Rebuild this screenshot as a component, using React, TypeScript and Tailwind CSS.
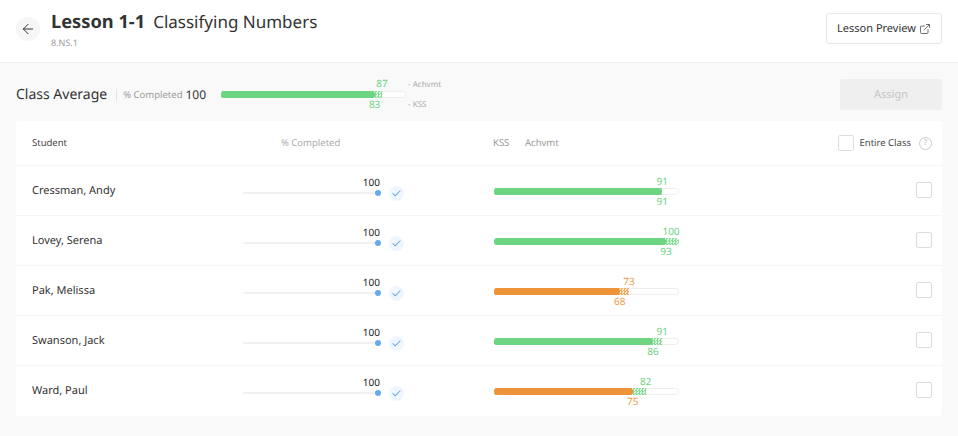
import React from "react";
import { ArrowLeft, ExternalLink, Check } from "lucide-react";

type S = { name: string; kss: number; ach: number };
const students: S[] = [
  { name: "Cressman, Andy", kss: 91, ach: 91 },
  { name: "Lovey, Serena", kss: 93, ach: 100 },
  { name: "Pak, Melissa", kss: 68, ach: 73 },
  { name: "Swanson, Jack", kss: 86, ach: 91 },
  { name: "Ward, Paul", kss: 75, ach: 82 },
];

const colorText = (v: number) => (v >= 80 ? "text-[#6dd482]" : "text-[#f09a45]");
const colorBg = (v: number) => (v >= 80 ? "bg-[#6dd482]" : "bg-[#ee9337]");
const hatch = (v: number) =>
  v >= 80
    ? "bg-[repeating-conic-gradient(#86dc98_0_25%,#dff6e4_0_50%)] bg-[length:3px_3px]"
    : "bg-[repeating-conic-gradient(#f2a860_0_25%,#fce8d4_0_50%)] bg-[length:3px_3px]";

function ScoreBar({ kss, ach, top, bottom }: { kss: number; ach: number; top: string; bottom: string }) {
  const width = 185;
  const pos = (v: number) => (v / 100) * width - 1;
  const labelPos = (v: number) => Math.min(pos(v), width - 9);
  return (
    <div className="relative h-[7px] rounded-full border border-[#eeeeee] bg-white" style={{ width }}>
      <div className={`absolute left-[-1px] top-[-1px] h-[7px] ${hatch(ach)}`} style={{ width: (ach / 100) * width, borderRadius: ach === 100 ? 9999 : 0 }} />
      <div className={`absolute left-[-1px] top-[-1px] h-[7px] rounded-full ${colorBg(kss)}`} style={{ width: (kss / 100) * width }} />
      <span className={`absolute ${top} -translate-x-1/2 text-[10px] leading-[14px] ${colorText(ach)}`} style={{ left: labelPos(ach) }}>{ach}</span>
      <span className={`absolute ${bottom} -translate-x-1/2 text-[10px] leading-[14px] ${colorText(kss)}`} style={{ left: labelPos(kss) }}>{kss}</span>
    </div>
  );
}

function Box({ className }: { className: string }) {
  return <div className={`rounded-[2px] border border-[#dddddd] bg-white ${className}`} />;
}

function Row({ s }: { s: S }) {
  return (
    <div className="flex h-[50px] items-center border-t border-[#f5f5f5] pl-4 pr-[10px]">
      <div className="w-[211px] pt-px text-[11px] text-[#333333]">{s.name}</div>
      <div className="relative mt-[4px] h-[2px] w-[135px] rounded-full bg-[#f0f0f0]">
        <span className="absolute right-[-2px] top-[-17px] text-[10px] leading-[14px] text-[#222222]">100</span>
        <span className="absolute right-[-3px] top-[-2px] h-[6px] w-[6px] rounded-full bg-[#65a9ee]" />
      </div>
      <div className="ml-[11px] mt-[5px] flex h-[15px] w-[15px] items-center justify-center rounded-full bg-[#eff6fd]">
        <Check size={11} strokeWidth={2.25} className="text-[#65a9ee]" />
      </div>
      <div className="ml-[90px] mt-[2px]">
        <ScoreBar kss={s.kss} ach={s.ach} top="top-[-15px]" bottom="top-[5px]" />
      </div>
      <Box className="ml-auto mt-[-2px] h-[16px] w-[16px]" />
    </div>
  );
}

export default function App() {
  return (
    <div className="h-[436px] w-[958px] overflow-hidden bg-[#f9f9f9] font-['Noto_Sans',sans-serif] [text-rendering:geometricPrecision]">
      <header className="flex h-[63px] items-center border-b border-[#f0f0f0] bg-white pl-4 pr-4">
        <div className="mt-[-5px] flex h-6 w-6 items-center justify-center rounded-full bg-[#f6f6f6]">
          <ArrowLeft size={16} strokeWidth={1.5} className="text-[#333333]" />
        </div>
        <div className="ml-[11px] mt-[-6px]">
          <div className="flex items-baseline">
            <span className="text-[18.25px] font-bold leading-[28px] text-[#333333]">Lesson 1-1</span>
            <span className="ml-[8px] text-[17px] leading-[28px] text-[#333333]">Classifying Numbers</span>
          </div>
          <div className="mt-[1px] text-[9px] leading-[12px] text-[#999999]">8.NS.1</div>
        </div>
        <div className="ml-auto mt-[-5px] flex h-[31px] w-[116px] items-center justify-center gap-[3px] rounded-[3px] border border-[#e8e8e8] bg-white pt-px text-[11px] text-[#333333]">
          Lesson Preview
          <ExternalLink size={12} strokeWidth={1.5} className="text-[#444444]" />
        </div>
      </header>

      <section className="flex h-[58px] items-center px-4 pt-[5px]">
        <span className="text-[14px] text-[#333333]">Class Average</span>
        <span className="ml-[9px] h-[12px] w-px bg-[#e5e5e5]" />
        <span className="ml-[6px] pt-px text-[9.5px] text-[#999999]">% Completed</span>
        <span className="ml-[3px] text-[12px] text-[#333333]">100</span>
        <div className="ml-[15px]">
          <ScoreBar kss={83} ach={87} top="top-[-16px]" bottom="top-[5px]" />
        </div>
        <div className="ml-[2px] flex h-[48px] flex-col justify-between py-[7px] text-[8px] leading-[14px] text-[#aaaaaa]">
          <span>- Achvmt</span>
          <span>- KSS</span>
        </div>
        <div className="ml-auto flex h-[31px] w-[102px] items-center justify-center rounded-[3px] bg-[#efefef] pt-px text-[11px] text-[#c4c4c4]">
          Assign
        </div>
      </section>

      <main className="mx-4 h-[295px] overflow-hidden rounded-[3px] bg-white">
        <div className="flex h-[44px] items-center pl-4 pr-[10px] text-[9.5px]">
          <div className="w-[249px] text-[#444444]">Student</div>
          <div className="w-[212px] text-[#aaaaaa]">% Completed</div>
          <div className="w-[32px] text-[#999999]">KSS</div>
          <div className="text-[#999999]">Achvmt</div>
          <Box className="ml-auto h-[16px] w-[16px]" />
          <span className="ml-[6px] text-[#444444]">Entire Class</span>
          <span className="ml-2 flex h-[13px] w-[13px] items-center justify-center rounded-full border border-[#cccccc] text-[8px] text-[#bbbbbb]">?</span>
        </div>
        {students.map((s) => (
          <Row key={s.name} s={s} />
        ))}
      </main>
    </div>
  );
}
